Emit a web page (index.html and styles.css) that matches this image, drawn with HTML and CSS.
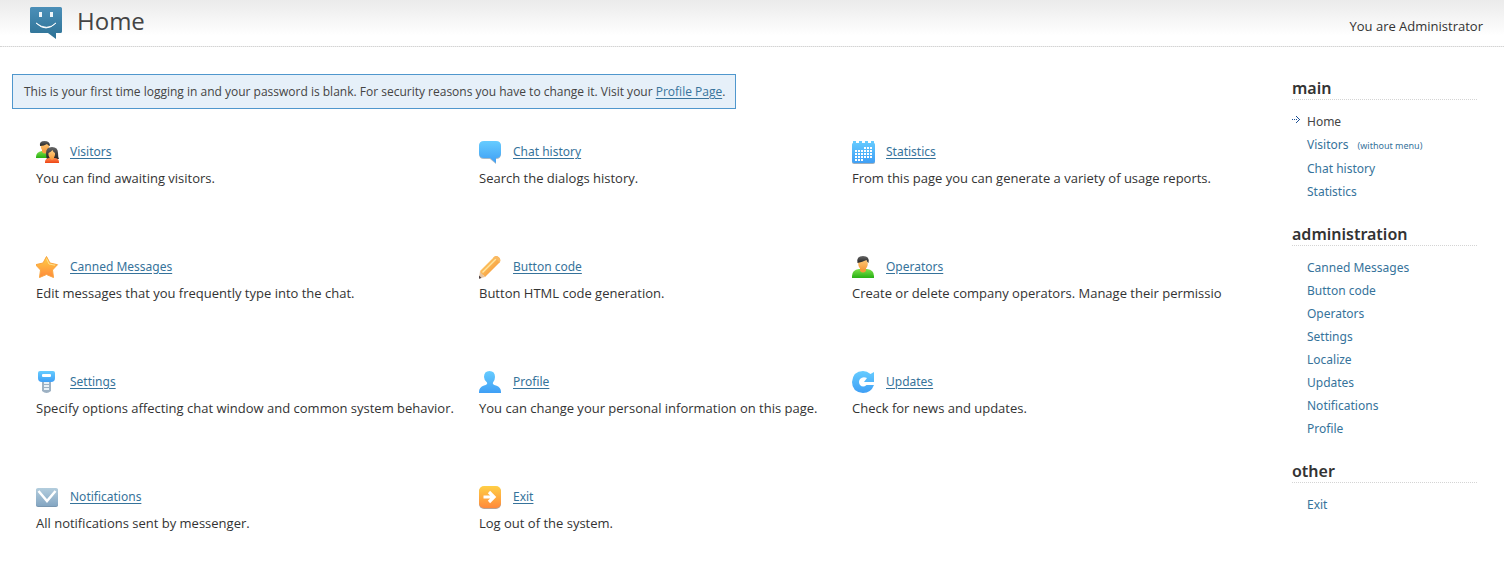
FILE: index.html
```html
<!DOCTYPE html>
<html lang="en">
<head>
<meta charset="utf-8">
<title>Home</title>
<link rel="stylesheet" href="styles.css">
</head>
<body>
<svg class="defs" width="0" height="0" aria-hidden="true">
  <defs>
    <linearGradient id="blue" x1="0" y1="0" x2="0" y2="1"><stop offset="0" stop-color="#66ccff"/><stop offset="1" stop-color="#3f9ff5"/></linearGradient>
    <linearGradient id="logo" x1="0" y1="0" x2="0" y2="1"><stop offset="0" stop-color="#4b8fb8"/><stop offset="1" stop-color="#2d7194"/></linearGradient>
    <linearGradient id="green" x1="0" y1="0" x2="0" y2="1"><stop offset="0" stop-color="#7be04a"/><stop offset="1" stop-color="#27b013"/></linearGradient>
    <linearGradient id="red" x1="0" y1="0" x2="0" y2="1"><stop offset="0" stop-color="#ff8a50"/><stop offset="1" stop-color="#ee4414"/></linearGradient>
    <linearGradient id="skin" x1="0" y1="0" x2="0" y2="1"><stop offset="0" stop-color="#ffcf80"/><stop offset="1" stop-color="#f79c3c"/></linearGradient>
    <linearGradient id="hair" x1="0" y1="0" x2="0" y2="1"><stop offset="0" stop-color="#666"/><stop offset="1" stop-color="#222"/></linearGradient>
    <linearGradient id="gold" x1="0" y1="0" x2="0" y2="1"><stop offset="0" stop-color="#ffcf45"/><stop offset="1" stop-color="#ff8a3c"/></linearGradient>
    <linearGradient id="steel" x1="0" y1="0" x2="0" y2="1"><stop offset="0" stop-color="#b3cddd"/><stop offset="1" stop-color="#84a6c2"/></linearGradient>
    <linearGradient id="wood" x1="0" y1="0" x2="1" y2="1"><stop offset="0" stop-color="#ffda7a"/><stop offset="1" stop-color="#f58a28"/></linearGradient>
  </defs>
</svg>

<header class="header">
  <svg class="logo" viewBox="0 0 32 32" aria-hidden="true">
    <path d="M1.500 0h29Q32 0 32 1.500v23Q32 26 30.500 26H26v6l-8-6H1.500Q0 26 0 24.500v-23Q0 0 1.500 0z" fill="url(#logo)"/>
    <path d="M9 5h3v5H9zM20 5h3v5h-3z" fill="#eef5f9"/>
    <path d="M6 16q10 10 20 0-9 8.500-20 0z" fill="#fff" stroke="#fff" stroke-width=".8"/>
  </svg>
  <h1 class="title">Home</h1>
  <p class="user">You are Administrator</p>
</header>

<div class="page">
  <main class="content">
    <p class="notice">This is your first time logging in and your password is blank. For security reasons you have to change it. Visit your <a class="underlined" href="#">Profile Page</a>.</p>

    <div class="dashboard">
      <section class="tile">
        <svg class="icon" viewBox="0 0 24 24" aria-hidden="true">
          <path d="M0 17q0-5 6-6h6q2 1 2 6v1H0z" fill="url(#green)"/>
          <path d="M6 9h6v3q-3 3-6 0z" fill="#f6a03e"/>
          <ellipse cx="9" cy="6.500" rx="4.200" ry="4.800" fill="url(#skin)"/>
          <path d="M4 6Q3 1 8.500 1 14 1 14 6q-2-.5-3-2-3 2-7 2z" fill="url(#hair)"/>
          <path d="M11 19q-1-2-1-6 0-6 6-6 6 0 6 6 0 4 1 6z" fill="url(#hair)"/>
          <path d="M9 22q0-4 5-4h4q5 0 5 4v1H9z" fill="url(#red)"/>
          <path d="M14 15h4v3q-2 4-4 0z" fill="#f79c3c"/>
          <path d="M12.500 13q2.500-1 4-3 .5 2 2.500 3v2q-1 4-3.300 4t-3.200-4z" fill="url(#skin)"/>
        </svg>
        <a class="link underlined" href="#">Visitors</a>
        <p class="text">You can find awaiting visitors.</p>
      </section>
      <section class="tile">
        <svg class="icon" viewBox="0 0 24 24" aria-hidden="true">
          <path d="M5 2h12q5 0 5 5v7q0 5-5 5v5l-6-5H5q-5 0-5-5V7q0-5 5-5z" fill="#a9bac8"/>
          <path d="M5 1h12q5 0 5 5v7q0 5-5 5v5l-6-5H5q-5 0-5-5V6q0-5 5-5z" fill="url(#blue)"/>
        </svg>
        <a class="link underlined" href="#">Chat history</a>
        <p class="text">Search the dialogs history.</p>
      </section>
      <section class="tile">
        <svg class="icon" viewBox="0 0 24 24" aria-hidden="true">
          <rect x="0" y="4" width="23" height="20" rx="2" fill="#9fb0be"/>
          <path d="M1 3V1h3v2h3V1h3v2h3V1h3v2h3V1h3v2q1 0 1 2v16q0 2-2 2H2q-2 0-2-2V5q0-2 1-2z" fill="url(#blue)"/>
          <path d="M12 8h8M3 11h17M3 14h17M3 17h17M3 20h8" stroke="#fff" stroke-width="2" stroke-dasharray="2 1"/>
        </svg>
        <a class="link underlined" href="#">Statistics</a>
        <p class="text">From this page you can generate a variety of usage reports.</p>
      </section>

      <section class="tile">
        <svg class="icon" viewBox="0 0 24 24" aria-hidden="true">
          <path d="M10.500 1.500 14 8l7.500 1.700-5 5.300 1 7.500-7-3-7 3L4.500 15l-5-5.300L7 8z" fill="url(#gold)" stroke="#f9a540" stroke-linejoin="round"/>
          <path d="M10.500 3.500 13 9l6 1.200" fill="none" stroke="#ffe08c"/>
        </svg>
        <a class="link underlined" href="#">Canned Messages</a>
        <p class="text">Edit messages that you frequently type into the chat.</p>
      </section>
      <section class="tile">
        <svg class="icon" viewBox="0 0 24 24" aria-hidden="true">
          <path d="m1 16 5 6-6 1.500z" fill="#e6c5a2"/>
          <path d="M0 20.500 2.500 23 0 23.800z" fill="#4b3f42"/>
          <path d="M1 16 15 2q2-2 4.500 0T21 7L6 22q-1-2-2.500-2.500T1 16z" fill="url(#wood)"/>
          <path d="M3.500 17.500 17 4" stroke="#ffe6a0" stroke-width="1.500"/>
          <path d="M15 2q2-2 4.500 0T21 7l-1 1q-.5-4-6-5z" fill="#f9b964"/>
        </svg>
        <a class="link underlined" href="#">Button code</a>
        <p class="text">Button HTML code generation.</p>
      </section>
      <section class="tile">
        <svg class="icon" viewBox="0 0 24 24" aria-hidden="true">
          <path d="M0 21q0-6 7-7h8q7 1 7 7v2H0z" fill="url(#green)"/>
          <path d="M8 11h6v5q-3 3-6 0z" fill="#f39a38"/>
          <ellipse cx="11" cy="8.800" rx="4.800" ry="5.800" fill="url(#skin)"/>
          <path d="M5.500 8Q4 1 11 1t5.500 7q-1.500-1-2-3-4 2-9 3z" fill="url(#hair)"/>
        </svg>
        <a class="link underlined" href="#">Operators</a>
        <p class="text">Create or delete company operators. Manage their permissio</p>
      </section>

      <section class="tile">
        <svg class="icon" viewBox="0 0 24 24" aria-hidden="true">
          <path d="M6 9h9v12q-4.500 4-9 0z" fill="#9db1c3"/>
          <path d="M8 12h5v2H8zM8 15h5v2H8zM8 18h5v2H8z" fill="#e9f1f7"/>
          <path d="M4 1h13q2 0 2 2v5q0 4-4 4H6q-4 0-4-4V3q0-2 2-2z" fill="url(#blue)"/>
          <rect x="6" y="4" width="9" height="3" rx="1" fill="#fff"/>
        </svg>
        <a class="link underlined" href="#">Settings</a>
        <p class="text">Specify options affecting chat window and common system behavior.</p>
      </section>
      <section class="tile">
        <svg class="icon" viewBox="0 0 24 24" aria-hidden="true">
          <path d="M0 22q0-5 5-6.500 4-1 3-3Q5 10 5 7q0-6 5.500-6T16 7q0 3-2 5.500-1 2 3 3 5 1.500 5 6.500v1H0z" fill="url(#blue)"/>
        </svg>
        <a class="link underlined" href="#">Profile</a>
        <p class="text">You can change your personal information on this page.</p>
      </section>
      <section class="tile">
        <svg class="icon" viewBox="0 0 24 24" aria-hidden="true">
          <path d="M11 1q4 0 7.500 3L22 2v10H12l3-4q-4-2-7 1-2 3 0 6 3 3 6.500 0H22q-3 8-11 8Q0 22 0 12 1 1 11 1z" fill="url(#blue)"/>
        </svg>
        <a class="link underlined" href="#">Updates</a>
        <p class="text">Check for news and updates.</p>
      </section>

      <section class="tile">
        <svg class="icon" viewBox="0 0 24 24" aria-hidden="true">
          <rect x="0" y="4" width="22" height="18" rx="2" fill="#7896b0"/>
          <rect x="0" y="3" width="22" height="18" rx="2" fill="url(#steel)"/>
          <path d="m2.500 6 8.500 10L19.500 6" fill="none" stroke="#fff" stroke-width="2.500"/>
        </svg>
        <a class="link underlined" href="#">Notifications</a>
        <p class="text">All notifications sent by messenger.</p>
      </section>
      <section class="tile">
        <svg class="icon" viewBox="0 0 24 24" aria-hidden="true">
          <rect x="0" y="2" width="22" height="22" rx="5" fill="#b9a394"/>
          <rect x="0" y="1" width="22" height="22" rx="5" fill="url(#gold)"/>
          <path d="M4.500 12H16M10 7l5 5-5 5" fill="none" stroke="#fff" stroke-width="3.200"/>
        </svg>
        <a class="link underlined" href="#">Exit</a>
        <p class="text">Log out of the system.</p>
      </section>
    </div>
  </main>

  <nav class="sidebar">
    <h2 class="heading">main</h2>
    <ul class="menu">
      <li class="item current"><svg class="arrow" viewBox="0 0 9 7" aria-hidden="true"><path d="M0 3h1v1H0zM2 3h1v1H2zM4 3h1v1H4zM4 0h1v1H4zM5 1h1v1H5zM6 2h1v1H6zM7 3h1v1H7zM6 4h1v1H6zM5 5h1v1H5zM4 6h1v1H4z" fill="#1c4f94"/></svg><a href="#">Home</a></li>
      <li class="item"><a href="#">Visitors</a> <a class="small" href="#">(without menu)</a></li>
      <li class="item"><a href="#">Chat history</a></li>
      <li class="item"><a href="#">Statistics</a></li>
    </ul>
    <h2 class="heading">administration</h2>
    <ul class="menu">
      <li class="item"><a href="#">Canned Messages</a></li>
      <li class="item"><a href="#">Button code</a></li>
      <li class="item"><a href="#">Operators</a></li>
      <li class="item"><a href="#">Settings</a></li>
      <li class="item"><a href="#">Localize</a></li>
      <li class="item"><a href="#">Updates</a></li>
      <li class="item"><a href="#">Notifications</a></li>
      <li class="item"><a href="#">Profile</a></li>
    </ul>
    <h2 class="heading">other</h2>
    <ul class="menu">
      <li class="item"><a href="#">Exit</a></li>
    </ul>
  </nav>
</div>
</body>
</html>
```
FILE: styles.css
```css
* { box-sizing: border-box; }

body {
  margin: 0;
  background: #fff;
  color: #333;
  font: 13px/20px "Open Sans", "Noto Sans", sans-serif;
}

h1, h2, p, ul { margin: 0; padding: 0; }

a { color: #36739b; text-decoration: none; }

.defs { position: absolute; }

.header {
  display: flex;
  align-items: flex-start;
  padding: 7px 21px 7px 30px;
  border-bottom: 1px dotted #d4d4d4;
  background: linear-gradient(#ebebeb, #fff 36px);
}

.logo { width: 32px; height: 32px; }

.title {
  margin-left: 15px;
  color: #444;
  font-size: 24px;
  font-weight: 400;
  line-height: 28px;
}

.user { margin: 9px 0 0 auto; }

.page {
  display: grid;
  grid-template-columns: minmax(0, 1fr) 185px;
  gap: 82px;
  padding: 27px 27px 0 12px;
}

.notice {
  width: fit-content;
  padding: 8px 10px 7px 11px;
  border: 1px solid #4f97cd;
  background: #e6f0f9;
  color: #444;
  font-size: 12px;
  line-height: 18px;
}

.link {
  font-family: "Noto Sans", sans-serif;
  font-size: 12px;
}

.underlined {
  text-decoration: underline;
  text-underline-offset: 2px;
}

.dashboard {
  display: grid;
  grid-template-columns: 443fr 373fr 358fr;
  row-gap: 67px;
  margin: 31px 0 0 24px;
}

.tile {
  display: grid;
  grid-template-columns: 24px minmax(0, 1fr);
  gap: 4px 10px;
  align-items: center;
}

.icon { width: 24px; height: 24px; }

.text { grid-column: 1 / -1; white-space: nowrap; }

.sidebar {
  padding-top: 3px;
  font-family: "Noto Sans", sans-serif;
  font-size: 12px;
}

.heading {
  border-bottom: 1px dotted #d4d4d4;
  font-size: 16px;
  font-weight: 600;
  line-height: 22px;
}

.menu {
  padding: 10px 0 20px 15px;
  list-style: none;
}

.item { position: relative; line-height: 23px; }

.current a { color: #444; }

.arrow {
  position: absolute;
  top: 6px;
  left: -15px;
  width: 9px;
  height: 7px;
}

.small { margin-left: 6px; font-size: 9px; }
```
